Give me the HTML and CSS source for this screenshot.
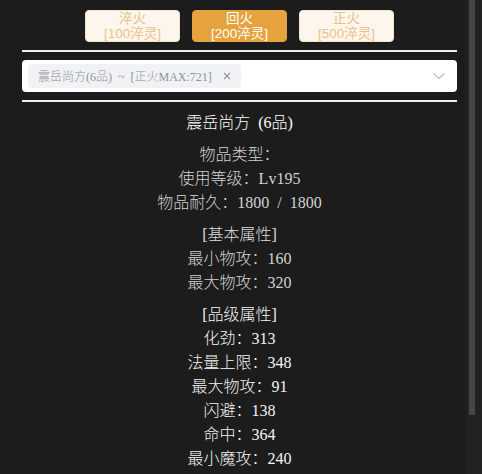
FILE: index.html
```html
<!DOCTYPE html>
<html lang="zh">
<head>
<meta charset="utf-8">
<link rel="stylesheet" href="styles.css">
</head>
<body>
<div class="page">
  <div class="tabs">
    <button class="tab"><span class="tab-line">淬火</span><span class="tab-line">[100淬灵]</span></button>
    <button class="tab active"><span class="tab-line">回火</span><span class="tab-line">[200淬灵]</span></button>
    <button class="tab"><span class="tab-line">正火</span><span class="tab-line">[500淬灵]</span></button>
  </div>
  <hr class="rule">
  <div class="select">
    <span class="tag">
      <span class="tag-text">震岳尚方(6品) ~ [正火MAX:721]</span>
      <svg class="tag-close" viewBox="0 0 12 12"><path d="M3 3 L9 9 M9 3 L3 9" stroke="#909399" stroke-width="1.1" fill="none"/></svg>
    </span>
    <svg class="chevron" viewBox="0 0 14 14"><path d="M1.5 4.5 L7 9.5 L12.5 4.5" stroke="#b8bbc2" stroke-width="1.2" fill="none"/></svg>
  </div>
  <hr class="rule">
  <div class="detail">
    <div class="title">震岳尚方 (6品)</div>
    <div class="group">
      <div class="row">物品类型：</div>
      <div class="row">使用等级：Lv195</div>
      <div class="row">物品耐久：1800 / 1800</div>
    </div>
    <div class="group">
      <div class="row head">[基本属性]</div>
      <div class="row">最小物攻：160</div>
      <div class="row">最大物攻：320</div>
    </div>
    <div class="group bright">
      <div class="row head">[品级属性]</div>
      <div class="row">化劲：313</div>
      <div class="row">法量上限：348</div>
      <div class="row">最大物攻：91</div>
      <div class="row">闪避：138</div>
      <div class="row">命中：364</div>
      <div class="row">最小魔攻：240</div>
    </div>
  </div>
</div>
<div class="scrollbar"><div class="scroll-thumb"></div></div>
</body>
</html>
```

FILE: styles.css
```css
html {
  background: #1c1c1c;
}
body {
  margin: 0;
  background: #1c1c1c;
}
::-webkit-scrollbar {
  display: none;
}
.scrollbar {
  position: fixed;
  top: 0;
  right: 0;
  width: 16px;
  height: 100%;
  background: #222222;
}
.scroll-thumb {
  margin-left: 3px;
  width: 6px;
  height: 415px;
  background: #454545;
}
.page {
  width: 435px;
  margin-left: 22px;
  padding: 10px 0 71px;
}
.tabs {
  display: flex;
  justify-content: center;
  gap: 12px;
}
.tab {
  width: 95px;
  height: 32px;
  padding: 0;
  border: 1px solid #f6e4c9;
  border-radius: 4px;
  background: #fdf6ec;
  color: #ebc18c;
  font-family: "Liberation Sans", "Noto Sans CJK SC", sans-serif;
  font-size: 13.5px;
  line-height: 15px;
  display: flex;
  flex-direction: column;
  align-items: center;
  justify-content: center;
}
.tab-line {
  display: block;
  height: 15px;
}
.tab.active {
  background: #e6a23c;
  border-color: #e6a23c;
  color: #ffffff;
}
.rule {
  margin: 8px 0;
  border: 0;
  height: 2px;
  background: #eeeeee;
}
.select {
  height: 32px;
  box-sizing: border-box;
  background: #ffffff;
  border-radius: 4px;
  display: flex;
  align-items: center;
  padding: 0 11px 0 6px;
}
.tag {
  height: 24px;
  box-sizing: border-box;
  display: flex;
  align-items: center;
  padding: 0 8px 0 10px;
  background: #f0f2f5;
  border-radius: 4px;
  color: #909399;
  font-family: "Liberation Serif", "Noto Sans CJK SC", serif;
  font-size: 12px;
  font-weight: 300;
  word-spacing: 3px;
}
.tag-close {
  width: 12px;
  height: 12px;
  margin-left: 9px;
}
.chevron {
  margin-left: auto;
  width: 14px;
  height: 14px;
}
.detail {
  padding-top: 1px;
  text-align: center;
  font-family: "Liberation Serif", "Noto Sans CJK SC", serif;
  font-size: 16px;
  font-weight: 300;
  line-height: 24px;
  word-spacing: 4px;
  color: #d2d2d2;
}
.title {
  color: #ffffff;
}
.group {
  margin-top: 8px;
}
.head {
  color: #dedede;
}
.bright .row {
  color: #f4f4f4;
}
```
